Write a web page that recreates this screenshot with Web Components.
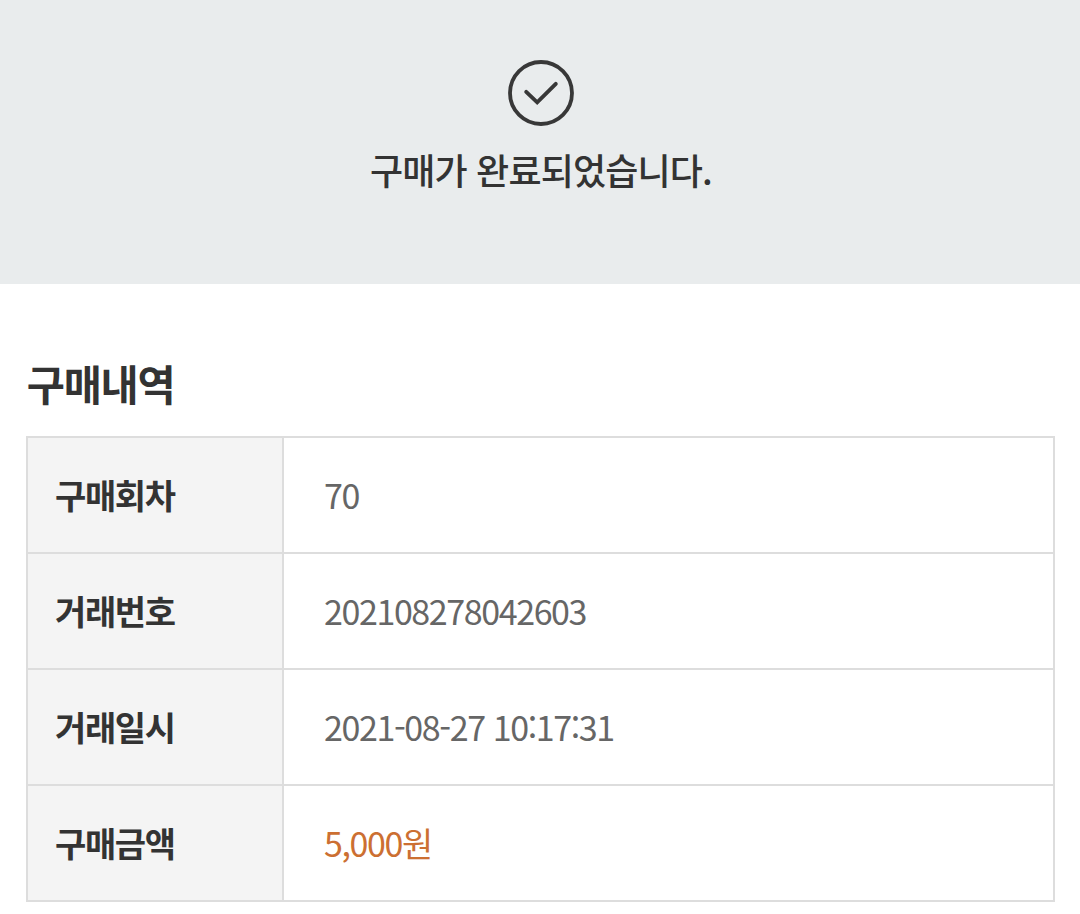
<!DOCTYPE html>
<html lang="ko">
<head>
<meta charset="utf-8">
<title>구매 완료</title>
<style>
body{margin:0;background:#fff;color:#333;font-family:"Noto Sans CJK KR","Noto Sans",sans-serif;overflow:hidden}
</style>
</head>
<body>
<purchase-result>구매가 완료되었습니다.</purchase-result>
<purchase-details>
<span slot="title">구매내역</span>
<detail-row label="구매회차">70</detail-row>
<detail-row label="거래번호">202108278042603</detail-row>
<detail-row label="거래일시">2021-08-27 10:17:31</detail-row>
<detail-row label="구매금액" accent>5,000원</detail-row>
</purchase-details>
<script>
class PurchaseResult extends HTMLElement{
constructor(){super();this.attachShadow({mode:'open'}).innerHTML=`<style>
:host{display:flex;flex-direction:column;align-items:center;box-sizing:border-box;height:284px;padding:59px 0 0 2px;background:#e9eced;color:#333}
svg{display:block;width:68px;height:68px}
p{margin:16px 0 0;font-size:36px;line-height:53px;font-weight:500;letter-spacing:-.84px;white-space:nowrap}
</style><svg viewBox="0 0 68 68" fill="none" stroke="#383838" stroke-linecap="round"><circle cx="34" cy="34" r="31" stroke-width="3.8"/><path d="M19.2 32.8L30.2 43.3L48.8 24.8" stroke-width="3.9"/></svg><p><slot></slot></p>`}}
class PurchaseDetails extends HTMLElement{
constructor(){super();this.attachShadow({mode:'open'}).innerHTML=`<style>
:host{display:block;padding:69px 25px 0 26px}
h1{margin:0 0 23px;padding-left:.8px;font-size:41.5px;line-height:60px;font-weight:700;letter-spacing:-1.3px}
.rows{border:2px solid #ddd;border-bottom:0}
</style><h1><slot name="title"></slot></h1><div class="rows"><slot></slot></div>`}}
class DetailRow extends HTMLElement{
constructor(){super();this.attachShadow({mode:'open'}).innerHTML=`<style>
:host{display:grid;grid-template-columns:256px 1fr;height:114px;border-bottom:2px solid #ddd;font-size:34px;line-height:50px;letter-spacing:-1.4px;color:#666}
:host([accent]){color:#cc6f32}
.label,.value{display:flex;align-items:center;box-sizing:border-box}
.label{padding-left:27px;background:#f4f4f4;border-right:2px solid #ddd;color:#333;font-weight:700}
.value{padding-left:40px}
</style><div class="label"></div><div class="value"><span><slot></slot></span></div>`}
connectedCallback(){this.shadowRoot.querySelector('.label').textContent=this.getAttribute('label')}}
customElements.define('purchase-result',PurchaseResult);
customElements.define('purchase-details',PurchaseDetails);
customElements.define('detail-row',DetailRow);
</script>
</body>
</html>
